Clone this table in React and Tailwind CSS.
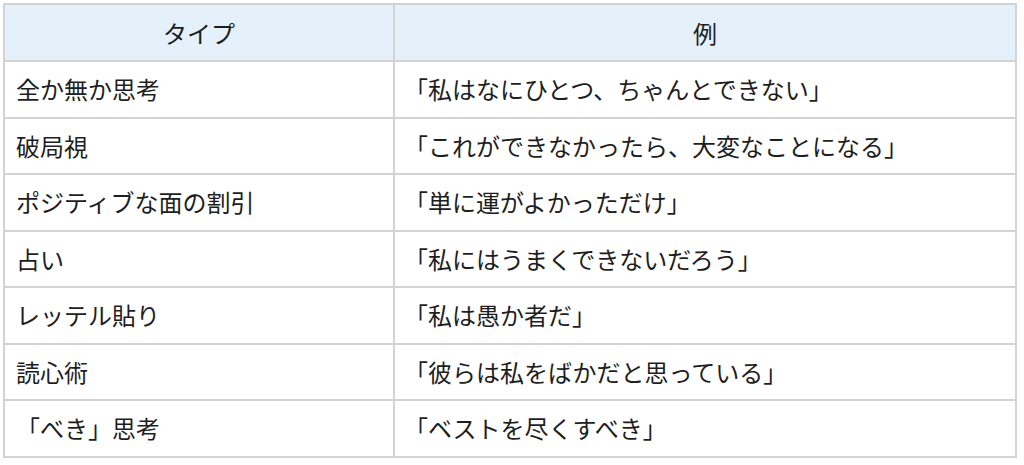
import React from 'react';

const rows = [
    { type: '全か無か思考', example: '「私はなにひとつ、ちゃんとできない」' },
    { type: '破局視', example: '「これができなかったら、大変なことになる」' },
    { type: 'ポジティブな面の割引', example: '「単に運がよかっただけ」' },
    { type: '占い', example: '「私にはうまくできないだろう」' },
    { type: 'レッテル貼り', example: '「私は愚か者だ」' },
    { type: '読心術', example: '「彼らは私をばかだと思っている」' },
    { type: '「べき」思考', example: '「ベストを尽くすべき」' },
];

function App() {
    return (
        <div
            className="w-[1024px] h-[465px] bg-white pt-[3px] pl-[3px]"
            style={{ fontFamily: '"Noto Sans CJK JP", "Noto Sans", sans-serif' }}
        >
            <table className="w-[1014px] border-collapse text-[24px] text-[#1e1e1e]">
                <thead>
                    <tr className="bg-[#e4f1fb] h-[57px]">
                        <th className="w-[390px] border-2 border-[#d3d3d3] font-normal text-center">タイプ</th>
                        <th className="border-2 border-[#d3d3d3] font-normal text-center">例</th>
                    </tr>
                </thead>
                <tbody>
                    {rows.map(row => (
                        <tr key={row.type} className="h-[56.5px]">
                            <td className="border-2 border-[#d3d3d3] pl-[11px]">{row.type}</td>
                            <td className="border-2 border-[#d3d3d3] pl-[9px]">{row.example}</td>
                        </tr>
                    ))}
                </tbody>
            </table>
        </div>
    );
}

export default App;
